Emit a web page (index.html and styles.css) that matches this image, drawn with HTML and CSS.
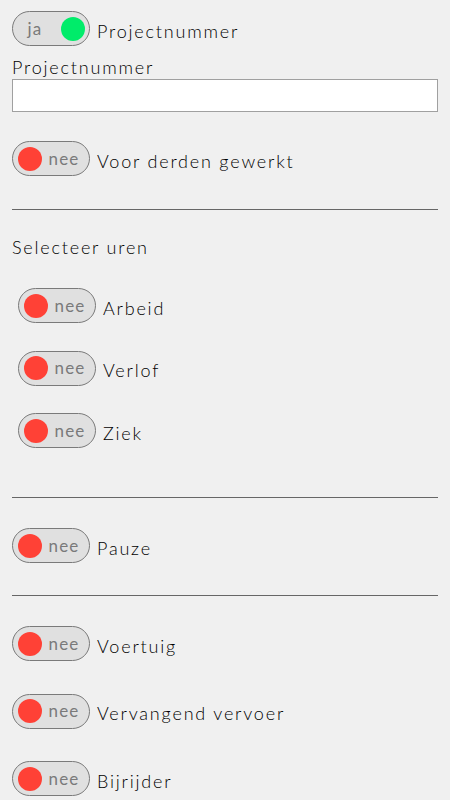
FILE: index.html
```html
<!DOCTYPE html>
<html>
<head>
<meta charset="utf-8">
<link rel="stylesheet" href="styles.css">
</head>
<body>
<div class="page">
  <div class="row r1">
    <div class="toggle on"><span class="tt">ja</span><span class="knob"></span></div>
    <span class="label">Projectnummer</span>
  </div>
  <div class="field-label">Projectnummer</div>
  <div class="input"></div>

  <div class="row r2">
    <div class="toggle"><span class="knob"></span><span class="tt">nee</span></div>
    <span class="label">Voor derden gewerkt</span>
  </div>

  <hr class="sep s1">

  <div class="heading">Selecteer uren</div>

  <div class="group">
    <div class="row sub">
      <div class="toggle"><span class="knob"></span><span class="tt">nee</span></div>
      <span class="label">Arbeid</span>
    </div>
    <div class="row sub">
      <div class="toggle"><span class="knob"></span><span class="tt">nee</span></div>
      <span class="label">Verlof</span>
    </div>
    <div class="row sub">
      <div class="toggle"><span class="knob"></span><span class="tt">nee</span></div>
      <span class="label">Ziek</span>
    </div>
  </div>

  <hr class="sep s2">

  <div class="row r-pauze">
    <div class="toggle"><span class="knob"></span><span class="tt">nee</span></div>
    <span class="label">Pauze</span>
  </div>

  <hr class="sep s3">

  <div class="group2">
    <div class="row">
      <div class="toggle"><span class="knob"></span><span class="tt">nee</span></div>
      <span class="label">Voertuig</span>
    </div>
    <div class="row">
      <div class="toggle"><span class="knob"></span><span class="tt">nee</span></div>
      <span class="label">Vervangend vervoer</span>
    </div>
    <div class="row">
      <div class="toggle"><span class="knob"></span><span class="tt">nee</span></div>
      <span class="label">Bijrijder</span>
    </div>
  </div>
</div>
</body>
</html>
```
FILE: styles.css
```css
html, body {
  margin: 0;
  padding: 0;
  background: #f0f0f0;
}
body {
  font-family: "Lato", "DejaVu Sans", sans-serif;
  font-weight: 300;
  color: #000;
  font-size: 18px;
  letter-spacing: 1.8px;
}
.page {
  padding: 11px 12px 0 12px;
  display: flex;
  flex-direction: column;
}
.row {
  display: flex;
  align-items: center;
  gap: 7px;
  height: 35px;
}
.toggle {
  box-sizing: border-box;
  width: 78px;
  height: 35px;
  border: 1.5px solid #7a7a7a;
  border-radius: 18px;
  background: #e0e0e0;
  display: flex;
  align-items: center;
  padding: 0 4.5px;
  flex: none;
}
.knob {
  width: 24px;
  height: 24px;
  border-radius: 50%;
  background: #ff4136;
  flex: none;
}
.toggle.on .knob {
  background: #00ec6a;
}
.tt {
  flex: 1;
  text-align: center;
  color: #7a7a7a;
  font-size: 17px;
  font-weight: 400;
  line-height: 20px;
  letter-spacing: 1.2px;
  padding-left: 2px;
}
.toggle.on .tt {
  padding-left: 0;
  padding-right: 8px;
}
.label {
  line-height: 20px;
  margin-top: 4px;
}
.field-label {
  margin-top: 11px;
  line-height: 20px;
}
.input {
  margin-top: 2px;
  box-sizing: border-box;
  height: 33px;
  background: #fff;
  border: 1.5px solid #a0a0a0;
}
.r2 {
  margin-top: 29px;
}
.sep {
  margin: 0;
  border: none;
  border-top: 1px solid #666;
  height: 0;
}
.s1 { margin-top: 33px; }
.heading {
  margin-top: 27px;
  line-height: 20px;
}
.group {
  margin-top: 31px;
  padding-left: 6px;
  display: flex;
  flex-direction: column;
  gap: 27.5px;
}
.s2 { margin-top: 49px; }
.r-pauze { margin-top: 30px; }
.s3 { margin-top: 32px; }
.group2 {
  margin-top: 30px;
  display: flex;
  flex-direction: column;
  gap: 32.5px;
}
```
